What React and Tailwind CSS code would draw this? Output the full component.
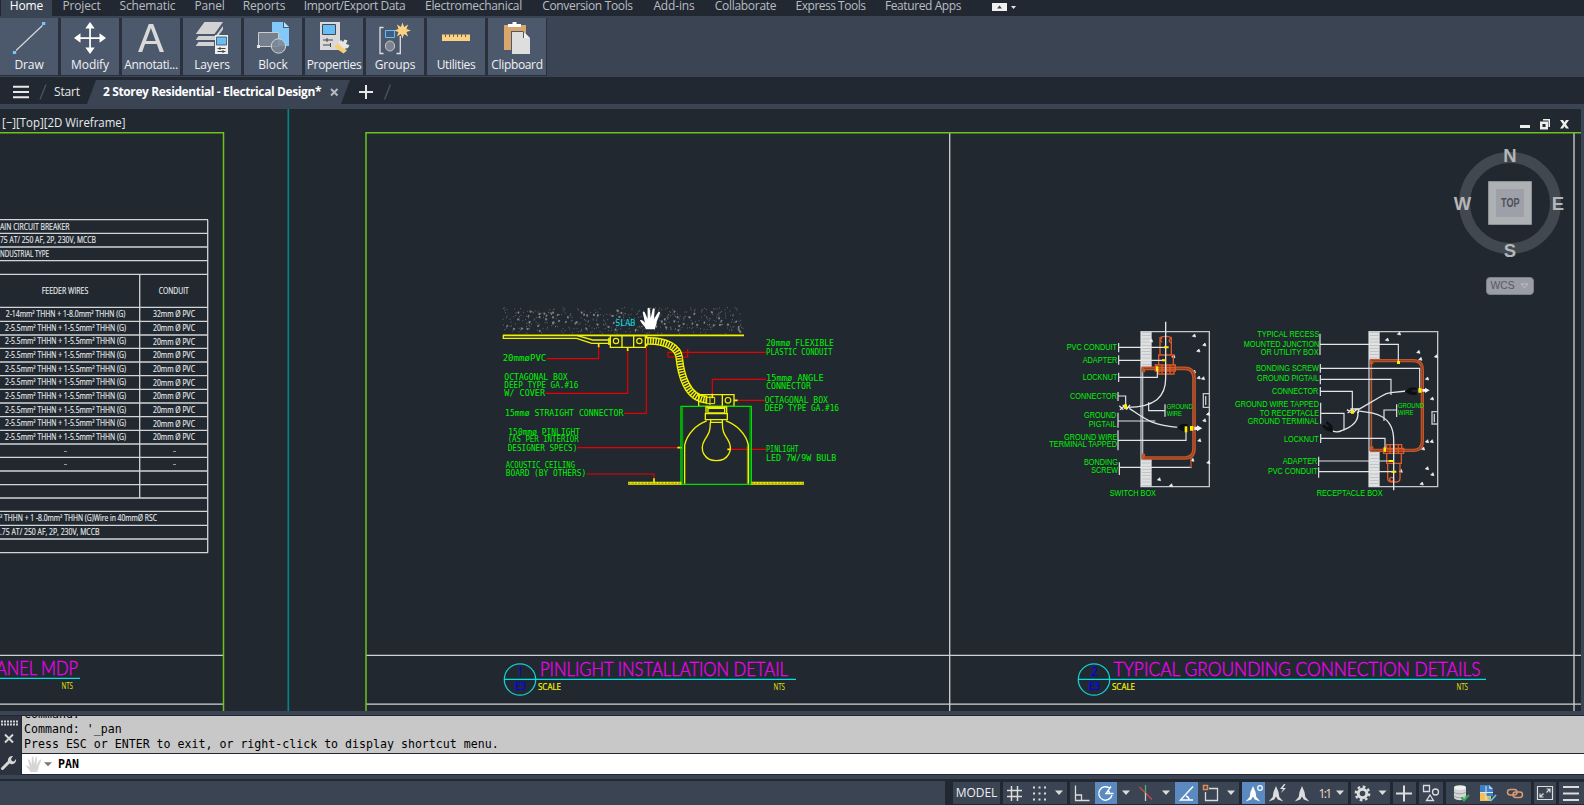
import React from "react";

const GREEN = "#00f400";
const RED = "#e60000";
const YEL = "#f2f200";
const ORG = "#c4562a";
const LINE = "#e6e8ea";

/* ---------- ribbon ---------- */

const MENU = [
  ["Project", "w-[37px]"],
  ["Schematic", "w-[55px]"],
  ["Panel", "w-[29px]"],
  ["Reports", "w-[40px]"],
  ["Import/Export Data", "w-[101px] tracking-[-0.4px]"],
  ["Electromechanical", "w-[97px] tracking-[-0.3px]"],
  ["Conversion Tools", "w-[91px] tracking-[-0.35px]"],
  ["Add-ins", "w-[42px]"],
  ["Collaborate", "w-[61px] tracking-[-0.3px]"],
  ["Express Tools", "w-[69px] tracking-[-0.5px]"],
  ["Featured Apps", "w-[76px] tracking-[-0.4px]"],
];

const DrawIcon = () => (
  <>
    <path d="M16 50.5 42.5 25.5" stroke="#dcdcdc" strokeWidth="1.1" />
    <path d="M12.800 51h3.400v3h-3.400zM42 22h3.300v3H42z" fill="#78c4fb" />
  </>
);
const ModifyIcon = () => (
  <g fill="#fff">
    <path d="M89.200 26h1.700v11.200H102v1.700H90.900V50h-1.700V38.900H78v-1.700h11.200z" />
    <path d="m90 22 4.700 6.500h-9.400zM90 54l4.700-6.500h-9.400zM74 38l6.500-4.700v9.400zM106 38l-6.500-4.700v9.400z" />
  </g>
);
const AnnotIcon = () => (
  <path
    fillRule="evenodd"
    d="M148.800 24h4.400L164 52h-4.300l-2.900-8h-11.800l-2.800 8H138zm2.100 4-4.800 13h9.600z"
    fill="#d9d9d9"
  />
);
const LayersIcon = () => (
  <>
    <g fill="#d2d2d2">
      <path d="M204.500 22H223l-8.500 12h-18.800z" />
      <path d="M198.500 36h17l7.500-10v3.500l-8 10.500h-19.300z" />
      <path d="M198.500 42h15.500v4h-18.300z" />
    </g>
    <path d="M215 35h13v19h-13z" fill="#eee" />
    <path d="M216.500 37h10v8h-10z" fill="#69bdf5" stroke="#3d4857" strokeWidth=".8" />
    <path d="M217.500 48.500h8M217.500 51.500h8M220 47v3M223 50v3" stroke="#444" />
  </>
);
const BlockIcon = () => (
  <>
    <path d="M272 22h11v6h6v18h-17z" fill="#82c8fb" />
    <path d="m284 22 5 5h-5z" fill="#b9e0ff" />
    <path d="M258.500 32.500h20v14h-20z" fill="#76808c" stroke="#c9ccd0" />
    <circle cx="278.500" cy="46" r="7.200" fill="#7f8894" fillOpacity=".85" stroke="#d0d3d6" />
    <path d="M257 45h3v3h-3z" fill="#e4e4e4" />
  </>
);
const PropsIcon = () => (
  <>
    <path d="M320 22h20v28h-20z" fill="#d9d9d9" />
    <path d="M322.500 24.500h13v10h-13z" fill="#69bdf5" stroke="#3d4857" />
    <path d="M323 40h10M323 45h7M327 38v4M330.500 43v4" stroke="#444" />
    <path d="m334 47 4-4 9 7.500-3.500 3z" fill="#f6cf79" />
    <path d="m338 43 3-3 2 2 1.500-2.500 3 1-1.500 3.500 3.500 1-1.500 3-4 1z" fill="#e6e6e6" />
  </>
);
const GroupsIcon = () => (
  <>
    <path d="M383.500 27.500H380v26h3.500M396.500 53.500h3.800V36" fill="none" stroke="#e0e0e0" strokeWidth="1.300" />
    <path d="M385.500 30.500h9v7h-9z" fill="#3e5d80" stroke="#69bdf5" />
    <ellipse cx="390" cy="46" rx="4.600" ry="5" fill="#7b848f" stroke="#c5c8cb" />
    <path
      d="m402.500 22.500 1.600 4.500 4-2.500-1.600 4.400 4.500 1.600-4.500 1.600 1.600 4.400-4-2.500-1.600 4.500-1.600-4.500-4 2.500 1.600-4.400-4.500-1.600 4.500-1.600-1.600-4.400 4 2.500z"
      fill="#fbd283"
    />
  </>
);
const UtilIcon = () => (
  <>
    <path d="M442 34.500h28v6.500h-28z" fill="#fbd283" />
    <path d="M445.500 34v3M449.500 34v3M453.500 34v3M457.500 34v3M461.500 34v3M465.500 34v3" stroke="#6c6452" strokeWidth="1" />
  </>
);
const ClipIcon = () => (
  <>
    <path d="M504 25h22v25h-22z" fill="#d9a76c" />
    <path d="M508 27v-3h4.500v-2h4v2h4.500v3z" fill="#fff" />
    <path d="M511 31h12l7 7v16h-19z" fill="#4b586b" />
    <path d="M512 32h11v6h7v16h-18z" fill="#dedede" />
    <path d="m524 32 6 6h-6z" fill="#f2f2f2" />
  </>
);

const TOOLS = [
  ["Draw", DrawIcon],
  ["Modify", ModifyIcon],
  ["Annotati...", AnnotIcon],
  ["Layers", LayersIcon],
  ["Block", BlockIcon],
  ["Properties", PropsIcon],
  ["Groups", GroupsIcon],
  ["Utilities", UtilIcon],
  ["Clipboard", ClipIcon],
];

function Ribbon() {
  return (
    <>
      <nav className="flex h-4 shrink-0 items-start bg-[#222831] text-[12px] leading-[12px] tracking-[-0.15px] whitespace-nowrap text-[#b9bdc3]">
        <span className="ml-px flex h-4 w-[51px] justify-center bg-[#3b4453] text-white">Home</span>
        <div className="ml-[11px] flex gap-5">
          {MENU.map(([label, w]) => (
            <span key={label} className={"flex justify-center " + w}>
              {label}
            </span>
          ))}
        </div>
        <svg className="ml-[31px]" width="26" height="14" viewBox="0 0 26 14">
          <path d="M0 3h15v8H0z" fill="#f0f0f0" />
          <path d="m7.500 5.500 2.500 3H5z" fill="#444" />
          <path d="m21.500 9 2.500-3h-5z" fill="#e6e6e6" />
        </svg>
      </nav>
      <div className="flex h-[61px] shrink-0 items-start bg-[#3b4453] pt-0.5">
        <div className="flex h-[58px] gap-[3px] bg-[#2a313c] pr-px pb-px">
          {TOOLS.map(([label, Icon], i) => (
            <div key={label} className="flex w-[58px] flex-col items-center bg-[#4c596c]">
              <svg width="58" height="39" viewBox={`${i * 61} 18 58 39`}>
                <Icon />
              </svg>
              <span className={"text-[12px] leading-4 whitespace-nowrap text-[#f0f1f3] " + (label.length > 8 ? "tracking-[-0.35px]" : "tracking-[-0.1px]")}>
                {label}
              </span>
            </div>
          ))}
        </div>
      </div>
    </>
  );
}

function FileTabs() {
  return (
    <div className="flex h-[27px] shrink-0 items-stretch bg-[#222831] text-[12px] text-[#e6e8ea]">
      <svg width="54" height="27" viewBox="0 77 54 27">
        <path d="M13 86.800h16M13 92h16M13 97.200h16" stroke="#e8e8e8" strokeWidth="2" />
        <path d="m40 99.500 6-15" stroke="#4a525e" strokeWidth="1.400" />
      </svg>
      <span className="flex w-[32px] items-center pt-[3px] tracking-[-0.2px]">Start</span>
      <div className="mt-[3px] ml-px flex w-[263px] items-center bg-[#3b4453] pl-4 [clip-path:polygon(9px_0,100%_0,calc(100%-9px)_100%,0_100%)]">
        <span className="w-[219px] text-[12px] font-bold tracking-[-0.38px] whitespace-nowrap text-white">
          2 Storey Residential - Electrical Design*
        </span>
        <svg className="ml-[5px]" width="16" height="16" viewBox="0 0 16 16">
          <path d="m4 5 6.500 6.500m0-6.500L4 11.500" stroke="#b6bac0" strokeWidth="2" />
        </svg>
      </div>
      <svg width="50" height="27" viewBox="350 77 50 27">
        <path d="M359 92h14M366 85v14" stroke="#e8e8e8" strokeWidth="2" />
        <path d="m384.500 99.500 6-15" stroke="#4a525e" strokeWidth="1.400" />
      </svg>
    </div>
  );
}

/* ---------- drawing helpers ---------- */

function T({ x, y, w, s = 9, fill = LINE, anchor = "start", font = "'Open Sans', sans-serif", weight = 400, bold = 0, children }) {
  return (
    <text
      x={x}
      y={y}
      textLength={w}
      lengthAdjust="spacingAndGlyphs"
      fontSize={s}
      fill={fill}
      stroke={bold ? fill : "none"}
      strokeWidth={bold}
      textAnchor={anchor}
      fontFamily={font}
      fontWeight={weight}
    >
      {children}
    </text>
  );
}

function Hand({ fill = "#fff" }) {
  return (
    <path
      d="M5.500 20.500c-1-3-4.500-5.500-5.500-8 1.300-1.200 3 .4 4.600 2L2.500 5c.2-1.200 1.600-1.200 2 0L7 11V1.500C7.200.3 8.800.3 9 1.500l.9 8.700 1.800-8.400c.5-1.100 1.900-.8 1.900.4l-.8 9 4-6.400c.8-.8 2-.1 1.700 1L15.500 13.500c0 3-1.500 4.500-1.700 7z"
      fill={fill}
    />
  );
}

const ROWS = [219.7, 233.3, 247, 260.7, 274.3, 307.3, 321.3, 335, 348.3, 362, 375.7, 389.3, 403, 416.7, 430.3, 444, 457.3, 471, 484.7, 498, 511.3, 525.3, 539, 552.7];
const WIRES = [313.800, 327.700, 341.200, 354.800, 368.600, 382, 395.800, 409.500, 423.200, 436.700];

function Schedule() {
  return (
    <g>
      <g stroke="#d2d4d6" strokeWidth="1.300">
        {ROWS.map((y) => (
          <path key={y} d={`M0 ${y}H208`} />
        ))}
        <path d="M207.700 219.700V552.700M139.700 274.300V498" />
      </g>
      <T x={0} y={230} w={69.500} s={8.500} bold={0.15}>AIN CIRCUIT BREAKER</T>
      <T x={0} y={243} w={96} s={8.500} bold={0.15}>75 AT/ 250 AF, 2P, 230V, MCCB</T>
      <T x={0} y={256.800} w={49} s={8.500} bold={0.15}>NDUSTRIAL TYPE</T>
      <T x={65} y={293.500} w={46.500} s={8.500} bold={0.15} anchor="middle">FEEDER WIRES</T>
      <T x={173.800} y={293.500} w={30} s={8.500} bold={0.15} anchor="middle">CONDUIT</T>
      {WIRES.map((y, i) => (
        <g key={y}>
          <T x={65.500} y={y + 3} w={i ? 121 : 119.500} s={8.500} bold={0.15} anchor="middle">
            {i ? "2-5.5mm² THHN + 1-5.5mm² THHN (G)" : "2-14mm² THHN + 1-8.0mm² THHN (G)"}
          </T>
          <T x={174} y={y + 3.500} w={42} s={8.500} bold={0.15} anchor="middle">{i ? "20mm Ø PVC" : "32mm Ø PVC"}</T>
        </g>
      ))}
      {[451.500, 464.500].map((y) => (
        <path key={y} d={`M64 ${y}h3M173 ${y}h3`} stroke="#96999d" />
      ))}
      <T x={0} y={520.500} w={157} s={8.500} bold={0.15}>² THHN + 1 -8.0mm² THHN (G)Wire in 40mmØ RSC</T>
      <T x={0} y={534.500} w={99.500} s={8.500} bold={0.15}>.75 AT/ 250 AF, 2P, 230V, MCCB</T>
    </g>
  );
}

/* Aggregate hatch of the concrete slab, from a small fixed-seed generator. */
function slabHatch() {
  let seed = 11;
  const rnd = () => ((seed = (seed * 16807) % 2147483647) / 2147483647);
  let dots = "";
  let stones = "";
  for (let i = 0; i < 380; i++) dots += `M${Math.round(38 + rnd() * 720)} ${Math.round(38 + rnd() * 78)}h2.500`;
  for (let i = 0; i < 75; i++) {
    const x = Math.round(40 + rnd() * 712);
    const y = Math.round(40 + rnd() * 68);
    stones += `M${x} ${y}l${4 + Math.round(rnd() * 4)} 2l-3 6l-4 -2z`;
  }
  return [dots, stones];
}
const [DOTS, STONES] = slabHatch();

const PIN_TEXT = [
  [38, 199, 131, "20mmøPVC"],
  [43, 254, 190, "OCTAGONAL BOX"],
  [43, 278, 222, "DEEP TYPE GA.#16"],
  [43, 302, 122, "W/ COVER"],
  [45, 363, 355, "15mmø STRAIGHT CONNECTOR"],
  [55, 419, 215, "150mmø PINLIGHT"],
  [53, 442, 213, "(AS PER INTERIOR"],
  [53, 467, 209, "DESIGNER SPECS)"],
  [47, 520, 208, "ACOUSTIC CEILING"],
  [47, 543, 242, "BOARD (BY OTHERS)"],
  [828, 154, 204, "20mmø FLEXIBLE"],
  [828, 179, 199, "PLASTIC CONDUIT"],
  [828, 258, 173, "15mmø ANGLE"],
  [828, 283, 135, "CONNECTOR"],
  [824, 323, 190, "OCTAGONAL BOX"],
  [824, 347, 223, "DEEP TYPE GA.#16"],
  [828, 471, 98, "PINLIGHT"],
  [828, 497, 211, "LED 7W/9W BULB"],
];

function Pinlight() {
  const conduit = "M468 138C530 136 566 158 568 190C572 230 588 312 652 314";
  return (
    <g transform="translate(490 295) scale(.33333)" fill="none" strokeWidth="3">
      <path d={DOTS} stroke="#7f8386" strokeWidth="2.500" />
      <path d={STONES} fill="#7d8183" stroke="none" />
      <T x={376} y={94} w={60} s={26} fill="#00dede" font="'DejaVu Sans Mono', monospace">SLAB</T>
      <g stroke={RED} strokeWidth="3.500">
        <path d="M170 191H326V150M166 295H413V160M402 355H469V122M262 458H565M290 537H492V552" />
        <path d="M828 172H534V186H593V162M828 253H667V300M824 316H742M828 463H720" />
      </g>
      <g stroke={YEL}>
        <path d="M40 121H762" strokeWidth="5" />
        <path d="M40 119V130H260L305 145H358M262 122L308 135H358" strokeWidth="4" />
        <path d="M361 122H466V157H361zM396 122V157M431 122V157" strokeWidth="4" />
        <path d="M357 128V150M470 122V154" strokeWidth="5" />
        <circle cx="378" cy="138" r="8" strokeWidth="3.500" />
        <circle cx="448" cy="138" r="8" strokeWidth="3.500" />
        <path d={conduit} strokeWidth="23" />
        <path d={conduit} stroke="#212830" strokeWidth="15" strokeDasharray="3.500 4.500" />
        <path d="M626 299H732V334H626zM697 299V334" strokeWidth="4" />
        <path d="M648 307H674V326H648zM660 303V330" />
        <circle cx="714" cy="316" r="8.500" strokeWidth="3.500" />
        <path d="M326 146V157M413 158V168M667 296V310M732 316H743M562 458H576M712 463H722M492 550V562" strokeWidth="5" />
      </g>
      <path d="M573 334H784V568H573z" stroke="#00e000" strokeWidth="4" />
      <path d="M578 337V568M780 337V568" stroke="#00b800" strokeWidth="3" />
      <g stroke={YEL}>
        <path d="M648 336H710V356H648zM654 340H704V354H654zM646 356H712V374H646zM662 374V382H697V374" strokeWidth="4" />
        <path d="M584 566V450C592 416 618 390 650 378M775 566V450C768 416 740 390 708 378" strokeWidth="4" />
        <path d="M772 452V566" stroke="#a0a000" />
        <path d="M661 382C661 412 655 418 645 433C625 466 645 497 679 497C713 497 733 466 713 433C703 418 697 412 697 382" strokeWidth="4" />
        <path d="M414 564.500H574M784 564.500H942" strokeWidth="9" />
        <path d="M414 564.500H574M784 564.500H942" stroke="#6a6a18" strokeWidth="2.500" strokeDasharray="7 3" />
      </g>
      {PIN_TEXT.map(([x, y, w, s]) => (
        <T key={x + "-" + y} x={x} y={y} w={w} s={27} fill={GREEN} font="'DejaVu Sans Mono', monospace">
          {s}
        </T>
      ))}
      <g transform="translate(450 36) scale(3.250)" stroke="none">
        <Hand />
      </g>
    </g>
  );
}

const SWITCH_TEXT = [
  [80, 106, 151, "PVC CONDUIT"],
  [128, 145, 104, "ADAPTER"],
  [128, 196, 104, "LOCKNUT"],
  [90, 253, 141, "CONNECTOR"],
  [132, 310, 97, "GROUND"],
  [146, 336, 84, "PIGTAIL"],
  [72, 374, 160, "GROUND WIRE"],
  [28, 397, 203, "TERMINAL TAPPED"],
  [132, 451, 102, "BONDING"],
  [154, 474, 80, "SCREW"],
  [209, 544, 139, "SWITCH BOX"],
  [380, 283, 78, "GROUND", 22],
  [380, 303, 46, "WIRE", 22],
];
const RECEPT_TEXT = [
  [97, 67, 186, "TYPICAL RECESS"],
  [56, 95, 227, "MOUNTED JUNCTION"],
  [107, 121, 174, "OR UTILITY BOX"],
  [93, 169, 189, "BONDING SCREW"],
  [96, 199, 186, "GROUND PIGTAIL"],
  [141, 236, 139, "CONNECTOR"],
  [30, 275, 252, "GROUND WIRE TAPPED"],
  [104, 302, 178, "TO RECEPTACLE"],
  [68, 328, 213, "GROUND TERMINAL"],
  [177, 380, 104, "LOCKNUT"],
  [173, 448, 104, "ADAPTER"],
  [129, 478, 149, "PVC CONDUIT"],
  [275, 544, 198, "RECEPTACLE BOX"],
  [519, 279, 78, "GROUND", 22],
  [519, 299, 46, "WIRE", 22],
];

const Labels = ({ rows }) =>
  rows.map(([x, y, w, s, size = 27]) => (
    <T key={x + "-" + y} x={x} y={y} w={w} s={size} fill={GREEN} font="'Liberation Sans', sans-serif">
      {s}
    </T>
  ));

const specks = (pts) => pts.map(([x, y]) => `M${x - 5} ${y + 3}l7 -7l3 9z`).join("");

function Masonry({ x, y, h }) {
  return (
    <g>
      <path d={`M${x} ${y}h32v${h}h-32z`} fill="#dfe0e2" />
      <path d={`M${x + 16} ${y + 2}v${h - 4}`} stroke="#a4a7ab" strokeWidth="26" strokeDasharray="1.500 8" />
    </g>
  );
}

function SwitchBox() {
  return (
    <g transform="translate(1040 315) scale(.33333)" fill="none">
      <path d="M303 50H508V515H303z" stroke="#c4c6c8" strokeWidth="4" />
      <Masonry x={303} y={50} h={108} />
      <Masonry x={303} y={432} h={83} />
      <path d="M508 236H490V277H508M497 243V270" stroke="#c4c6c8" strokeWidth="4" />
      <path d={specks([[462, 61], [493, 88], [475, 106], [476, 187], [489, 189], [462, 169], [504, 296], [493, 315], [478, 375], [505, 441], [457, 434], [357, 492], [393, 510], [333, 76], [400, 123]])} fill="#f0f0f0" stroke="#f0f0f0" strokeWidth="2" />
      <path d="M308 158V430" stroke="#b7b9bc" strokeWidth="4" />
      <path d="M310 172V160H435Q462 160 462 190V400Q462 429 435 429H310V416" stroke={ORG} strokeWidth="11" />
      <path d="M312 160H435Q462 160 462 190V400Q462 429 435 429H312" stroke="#7c3c22" strokeWidth="2.500" />
      <g stroke="#dd5a28" strokeWidth="4">
        <path d="M360 120V68Q377 60 394 68V120zM356 120H400V150H356zM346 150H406V168H346zM356 168V177H402V168M366 150V176M378 150V176M390 150V176M352 158H404" />
        <path d="M366 68Q358 76 366 82M393 70Q382 76 393 84" />
      </g>
      <g stroke="#e4e5e6" strokeWidth="4">
        <path d="M377 20V190C377 246 345 276 262 277M268 280C320 315 330 328 420 338" />
        <path d="M236 84V112M236 97H375M236 121V149M236 136H372M236 173V201M236 187H352V165M234 231V258M234 243H257V270M234 293V338M234 318H346M234 346V406M234 376H438V345M238 442V480M238 457H455M326 262V287H375M375 268V305" strokeWidth="3.500" />
      </g>
      <path d="M238 272l12 12M240 284l14-12M258 284l12-14M248 270l16 12" stroke="#e8e8e8" strokeWidth="4" />
      <path d="M252 268h9v14h-9zM372 94h14v6h-14zM366 133h12v6h-12zM348 154h7v14h-7zM450 333h10v14h-10z" fill="#ffea00" />
      <path d="M410 337l16-10q10-2 18 2v20q-10 2-18-2z" fill="#0c0f12" />
      <path d="M434 334h8v18h-8z" fill="#ffea00" />
      <path d="M463 335h8v-4l16 9l-16 9v-4h-8z" fill="#f2f2f2" />
      <path d="M453 430V460" stroke={ORG} strokeWidth="4" />
      <Labels rows={SWITCH_TEXT} />
    </g>
  );
}

function ReceptacleBox() {
  return (
    <g transform="translate(1225 315) scale(.33333)" fill="none">
      <path d="M432 50H638V515H432z" stroke="#c4c6c8" strokeWidth="4" />
      <Masonry x={432} y={50} h={84} />
      <Masonry x={432} y={408} h={107} />
      <path d="M638 290H621V327H638M628 296V322" stroke="#c4c6c8" strokeWidth="4" />
      <path d={specks([[486, 73], [522, 55], [580, 110], [586, 131], [606, 190], [621, 250], [633, 123], [606, 378], [620, 378], [606, 459], [622, 477], [594, 400], [590, 505], [527, 467]])} fill="#f0f0f0" stroke="#f0f0f0" strokeWidth="2" />
      <path d="M439 136V408" stroke="#b4582f" strokeWidth="5" />
      <path d="M440 148V137H565Q592 137 592 165V378Q592 406 565 406H440V394" stroke={ORG} strokeWidth="10" />
      <path d="M440 137H565Q592 137 592 165V378Q592 406 565 406H440" stroke="#7c3c22" strokeWidth="2.500" />
      <g stroke="#dd5a28" strokeWidth="4">
        <path d="M485 389H530V400H485zM476 400H536V415H476zM485 415H529V445H485zM488 445V490Q488 501 500 501H514Q525 501 525 490V445M495 389V414M508 389V414M520 389V414" />
        <circle cx="500" cy="493" r="6" />
      </g>
      <g stroke="#e4e5e6" strokeWidth="4">
        <path d="M400 288C440 292 506 296 506 375V526M400 284L470 243Q484 234 498 233L545 228M398 290C404 325 370 340 350 347Q338 354 322 348" />
        <path d="M285 56V120M285 88H520V140M286 147V173M286 160H584V222M286 180V208M286 193H498V240M286 216V243M286 229H382V284M287 263V326M287 295H357V346M287 357V384M287 370H480V398M281 425V453M281 438H498M281 457V488M281 470H508M515 268V306M515 285H477V318" strokeWidth="3.500" />
      </g>
      <path d="M366 284l14 10M368 294l14-12M384 294l14-14M376 282h24v12" stroke="#e8e8e8" strokeWidth="4" />
      <path d="M378 284h9v12h-9zM516 138h9v9h-9zM580 220h10v13h-10zM476 397h7v13h-7zM491 435h15v6h-15zM499 467h15v6h-15z" fill="#ffea00" />
      <path d="M540 229l16-10h18v4h-14v9h14v6h-18zM322 350l-16-4l-14-12l5-4l12 9l4-7l-10-8l4-4l14 12z" fill="#0c0f12" stroke="#0c0f12" strokeWidth="3" />
      <path d="M592 222h8v-4l14 8l-14 8v-4h-8z" fill="#f2f2f2" />
      <Labels rows={RECEPT_TEXT} />
    </g>
  );
}

function TitleTag({ cx, n, title, x, w, end, nts }) {
  return (
    <g>
      <circle cx={cx} cy="679.500" r="15.700" fill="none" stroke="#12cfd4" strokeWidth="1.300" />
      <path d={`M${cx - 16} 679.400H${end}`} stroke="#00e2e8" strokeWidth="1.300" />
      <T x={cx} y={676} s={13} w={n === "1" ? 4 : 7} anchor="middle" fill="#0000f0" bold={0.3}>{n}</T>
      <T x={cx} y={690} s={10} w={11} anchor="middle" fill="#0000f8" bold={0.3}>E3</T>
      <T x={x} y={676} s={19.500} w={w} fill="#f400f4" font="Lato, sans-serif" weight={300} bold={0.3}>{title}</T>
      <T x={cx + 18} y={690} s={9} w={23} fill="#f6f600" bold={0.2}>SCALE</T>
      <T x={nts} y={690} s={9} w={11.500} fill="#e8e800">NTS</T>
    </g>
  );
}

function ViewCube() {
  return (
    <g fontFamily="'Liberation Sans', Arial, sans-serif">
      <g fill="#eceded">
        <path d="M1520 125h10v3h-10z" />
        <path d="M1543 119h7v8h-1.500v-6.500H1543zM1540 121.500h8v8h-8zm2.500 2.500v3h3v-3z" fillRule="evenodd" />
        <path d="m1560 120 3 0 1.500 2.200 1.500-2.200h3l-3 4.200 3 4.300h-3l-1.500-2.300-1.500 2.300h-3l3-4.300z" />
      </g>
      <circle cx="1510" cy="203" r="45.500" fill="none" stroke="#42484f" strokeWidth="11" />
      <g fill="#b4b6b8" fontSize="18.500" fontWeight="700" textAnchor="middle">
        <text x="1510" y="161.800">N</text>
        <text x="1510" y="257">S</text>
        <text x="1462.500" y="209.700">W</text>
        <text x="1558" y="209.700">E</text>
      </g>
      <path d="M1488.500 181.500h43v43h-43z" fill="#aeb1b4" stroke="#8d9094" />
      <path d="M1496 189h28v28h-28z" fill="#9da0a9" />
      <text x="1510.300" y="207.300" textLength="18.500" lengthAdjust="spacingAndGlyphs" fontSize="12" fontWeight="700" fill="#4d5056" textAnchor="middle">
        TOP
      </text>
      <rect x="1486.500" y="277.500" width="47" height="17" rx="3.500" fill="#9a9ca8" stroke="#7c8089" />
      <text x="1490.500" y="289" textLength="24" lengthAdjust="spacingAndGlyphs" fontSize="11.500" fill="#555962">WCS</text>
      <path d="M1521 284h7l-3.500 4z" fill="none" stroke="#c3c5cd" strokeWidth=".8" />
    </g>
  );
}

function Canvas() {
  return (
    <svg className="block bg-[#212830]" width="1581" height="602" viewBox="0 109 1581 602">
      <path d="M288.300 109V711" stroke="#00878c" strokeWidth="1.600" />
      <g stroke="#cfd1d3" strokeWidth="1.300">
        <path d="M0 655.400H223.500M366 655.400H1581M0 704.200H223.500M366 704.200H1581" />
        <path d="M949.700 133V711M1574 133V711" />
      </g>
      <path d="M0 132.700H223.500V711M366 711V132.700H1581" fill="none" stroke="#6ac41c" strokeWidth="1.500" />
      <T x={2} y={127} w={123.500} s={12.500} fill="#e8eaec">[−][Top][2D Wireframe]</T>
      <Schedule />
      <T x={-4} y={675} w={82} s={19.500} fill="#f400f4" font="Lato, sans-serif" weight={300} bold={0.3}>ANEL MDP</T>
      <path d="M0 678.400H80" stroke="#00e2e8" strokeWidth="1.300" />
      <T x={61.500} y={689} s={9} w={11.500} fill="#e8e800">NTS</T>
      <Pinlight />
      <SwitchBox />
      <ReceptacleBox />
      <TitleTag cx={520} n="1" title="PINLIGHT INSTALLATION DETAIL" x={540} w={248} end={796} nts={773.500} />
      <TitleTag cx={1094} n="2" title="TYPICAL GROUNDING CONNECTION DETAILS" x={1113.500} w={367} end={1486} nts={1456.500} />
      <ViewCube />
    </svg>
  );
}

/* ---------- command line ---------- */

function CommandLine() {
  return (
    <div className="flex h-[60px] shrink-0 border-t border-[#222831] bg-[#2c323e]">
      <svg width="21" height="59" viewBox="0 716 21 59">
        <path d="M1 721.500h17M1 724.500h17" stroke="#d0d2d5" strokeWidth="2" strokeDasharray="2 1" />
        <path d="m5 734.500 8 8m0-8-8 8" stroke="#d5d7d9" strokeWidth="2" />
        <path d="M2.500 768.500 9.500 761.500" stroke="#d5d7d9" strokeWidth="3" strokeLinecap="round" />
        <path d="M8 761.500c-.8-3 1.500-5.800 5-5.500l-2 3 .8 2 2.200.6 2-2.600c.8 3.500-2.500 6-5.500 5z" fill="#d5d7d9" />
      </svg>
      <div className="flex flex-1 flex-col border-l border-[#222831] [font-family:'DejaVu_Sans_Mono',monospace] text-[11.600px] text-black">
        <div className="flex h-[37px] flex-col justify-end overflow-hidden bg-[#c8c8c8] pl-0.5 leading-[15px]">
          <p>Command:</p>
          <p>Command: '_pan</p>
          <p className="pb-px">Press ESC or ENTER to exit, or right-click to display shortcut menu.</p>
        </div>
        <div className="flex h-[22px] items-center border-y border-[#222831] bg-white font-bold">
          <svg width="35" height="20" viewBox="22 754 35 20">
            <g transform="translate(26 756) scale(.82 .78)">
              <Hand fill="#d6d6d6" />
            </g>
            <path d="M44 762.300h8l-4 4z" fill="#777" />
          </svg>
          <span className="ml-px pt-0.5">PAN</span>
        </div>
      </div>
    </div>
  );
}

/* ---------- status bar ---------- */

const arrow = (cx) => <path d={`M${cx - 4} 790.500h8l-4 4.500z`} fill="#dcdcdc" />;
const compassA = "l-2.500 6 -.8 5 -4 4.500 5.500-2 1.800-3 1.800 3 5.500 2-4-4.500-.8-5z";

const GROUPS = [
  [
    [1003, 25, <path key="i" d="M1011.500 786v15M1017.500 786v15M1007 790.500h15M1007 796.500h15" stroke="#dcdcdc" strokeWidth="1.500" />],
    [1028, 22, <path key="i" d="M1033 787.500h14M1033 793.500h14M1033 799.500h14" stroke="#dcdcdc" strokeWidth="2" strokeDasharray="2 3.500" />],
    [1050, 17, arrow(1059)],
  ],
  [
    [1070, 25, <path key="i" d="M1075.500 785.500v15h14M1076 795h5.500v5" fill="none" stroke="#dcdcdc" strokeWidth="1.300" />],
    [1095, 22, <path key="i" d="M1113.500 793.500h-7.500l5-7M1110 788.500a6.700 6.700 0 1 0 2 6.500M1106 793.500m3.500 0a3.500 3.500 0 0 0-1.400-3" fill="none" stroke="#fff" strokeWidth="1.400" />, true],
    [1117, 17, arrow(1126)],
    [1134, 23, (
      <g key="i" fill="none" strokeWidth="1.300">
        <path d="m1139.500 787 12.500 12.500" stroke="#d0454c" />
        <path d="M1145.500 785v8" stroke="#4db56a" />
        <path d="M1145.500 793v8" stroke="#c9cbce" />
      </g>
    )],
    [1157, 18, arrow(1166)],
    [1175, 23, <path key="i" d="M1193 786.500 1180.500 800H1193M1186 796q3 1 3 4" fill="none" stroke="#fff" strokeWidth="1.400" />, true],
    [1198, 25, (
      <g key="i" fill="none">
        <path d="M1209 788.500h8.500v12h-12V792" stroke="#dcdcdc" strokeWidth="1.300" />
        <path d="M1203.500 785.500h4v4h-4z" stroke="#e08a55" strokeWidth="1.500" />
      </g>
    )],
    [1223, 16, arrow(1231)],
  ],
  [
    [1242, 23, (
      <g key="i">
        <path d={`M1253 786${compassA}`} fill="#fff" />
        <circle cx="1260" cy="788" r="2.300" fill="none" stroke="#fff" strokeWidth="1.200" />
      </g>
    ), true],
    [1265, 26, (
      <g key="i" fill="#dcdcdc">
        <path d={`M1276 786${compassA}`} />
        <path d="m1284 784-4 5h3l-2 4 5-5h-3l2.500-4z" />
      </g>
    )],
    [1291, 23, <path key="i" d={`M1302 786${compassA}`} fill="#dcdcdc" />],
    [1314, 34, (
      <g key="i">
        <text x="1318.500" y="797.500" textLength="13.500" fontSize="12" fill="#f0dcc4" fontFamily="'Open Sans', sans-serif">1:1</text>
        {arrow(1340)}
      </g>
    )],
  ],
  [
    [1351, 24, (
      <g key="i" fill="none" stroke="#dcdcdc">
        <circle cx="1362.500" cy="793.500" r="4.300" strokeWidth="3" />
        <circle cx="1362.500" cy="793.500" r="6.700" strokeWidth="2.400" strokeDasharray="2.700 2.560" />
      </g>
    )],
    [1375, 15, arrow(1382.5)],
  ],
  [[1393, 23, <path key="i" d="M1396 793.500h16M1404 785.500v16" stroke="#dcdcdc" strokeWidth="2" />]],
  [[1419, 24, (
    <g key="i" fill="none" stroke="#dcdcdc" strokeWidth="1.300">
      <path d="M1423.500 785.500h6v6h-6zM1430 795l3.500 5.500h-7z" />
      <circle cx="1435.500" cy="792" r="3" />
    </g>
  )]],
  [
    [1446, 29, (
      <g key="i">
        <path d="M1454 787.500v10c0 3.500 12 3.500 12 0v-10z" fill="#d4d4d4" />
        <ellipse cx="1460" cy="787.500" rx="6" ry="2.300" fill="#efefef" />
        <path d="M1454 791.500c0 3 12 3 12 0M1454 795.500c0 3 12 3 12 0" fill="none" stroke="#8f949a" strokeWidth=".8" />
        <path d="m1461.500 797.500 2.500 3 5-5.500" fill="none" stroke="#2fa84f" strokeWidth="2" />
      </g>
    )],
    [1475, 27, (
      <g key="i">
        <path d="M1480 785h9l4 4v7h-13z" fill="#3f7fc4" />
        <path d="m1489 785 4 4h-4z" fill="#a9d3f5" />
        <path d="M1480 793h6v3h5v5h-11z" fill="#f2c25a" />
        <path d="M1480 792.500h13M1486 786v14" stroke="#dbe7f2" />
        <path d="m1488.500 797.500 2.500 3 5-5.500" fill="none" stroke="#67c3dc" strokeWidth="1.800" />
      </g>
    )],
    [1502, 29, (
      <g key="i" fill="none" stroke="#dd9a70" strokeWidth="1.500">
        <rect x="1507.500" y="789.500" width="9.500" height="5.500" rx="2.700" />
        <rect x="1513" y="792" width="9.500" height="5.500" rx="2.700" />
      </g>
    )],
  ],
  [[1534, 22, (
    <g key="i" fill="none" stroke="#dcdcdc" strokeWidth="1.200">
      <path d="M1537.500 786.500h15v13h-15z" />
      <path d="M1546.500 789h3.500v3.500M1549.500 789.500l-3 3M1543.500 797H1540v-3.500M1540.500 796.500l3-3" />
    </g>
  )]],
  [[1559, 25, <path key="i" d="M1563 787h16M1563 793.500h16M1563 800h16" stroke="#dcdcdc" strokeWidth="2" />]],
];

function StatusBar() {
  return (
    <footer className="flex h-6 flex-1 gap-[3px] bg-[#222831]">
      <div className="mr-[5px] w-[945px] shrink-0 bg-[#3b4453]" />
      <div className="my-px flex w-[47px] shrink-0 items-center justify-center bg-[#3b4453] text-[12px] tracking-[-0.1px] text-[#eceef0]">MODEL</div>
      {GROUPS.map((cells, g) => (
        <div key={g} className="my-px flex shrink-0 bg-[#3b4453]">
          {cells.map(([x, w, icon, on]) => (
            <svg key={x} className={on ? "bg-[#5b8ac0]" : ""} width={w} height="22" viewBox={`${x} 782 ${w} 22`}>
              {icon}
            </svg>
          ))}
        </div>
      ))}
    </footer>
  );
}

export default function App() {
  return (
    <div className="flex h-[805px] w-[1584px] flex-col overflow-hidden bg-[#3b4453] [font-family:'Open_Sans','Noto_Sans',sans-serif]">
      <Ribbon />
      <FileTabs />
      <main className="shrink-0 pt-[5px] pb-1">
        <Canvas />
      </main>
      <CommandLine />
      <div className="h-1 shrink-0" />
      <div className="h-0.5 shrink-0 bg-[#222831]" />
      <StatusBar />
    </div>
  );
}
